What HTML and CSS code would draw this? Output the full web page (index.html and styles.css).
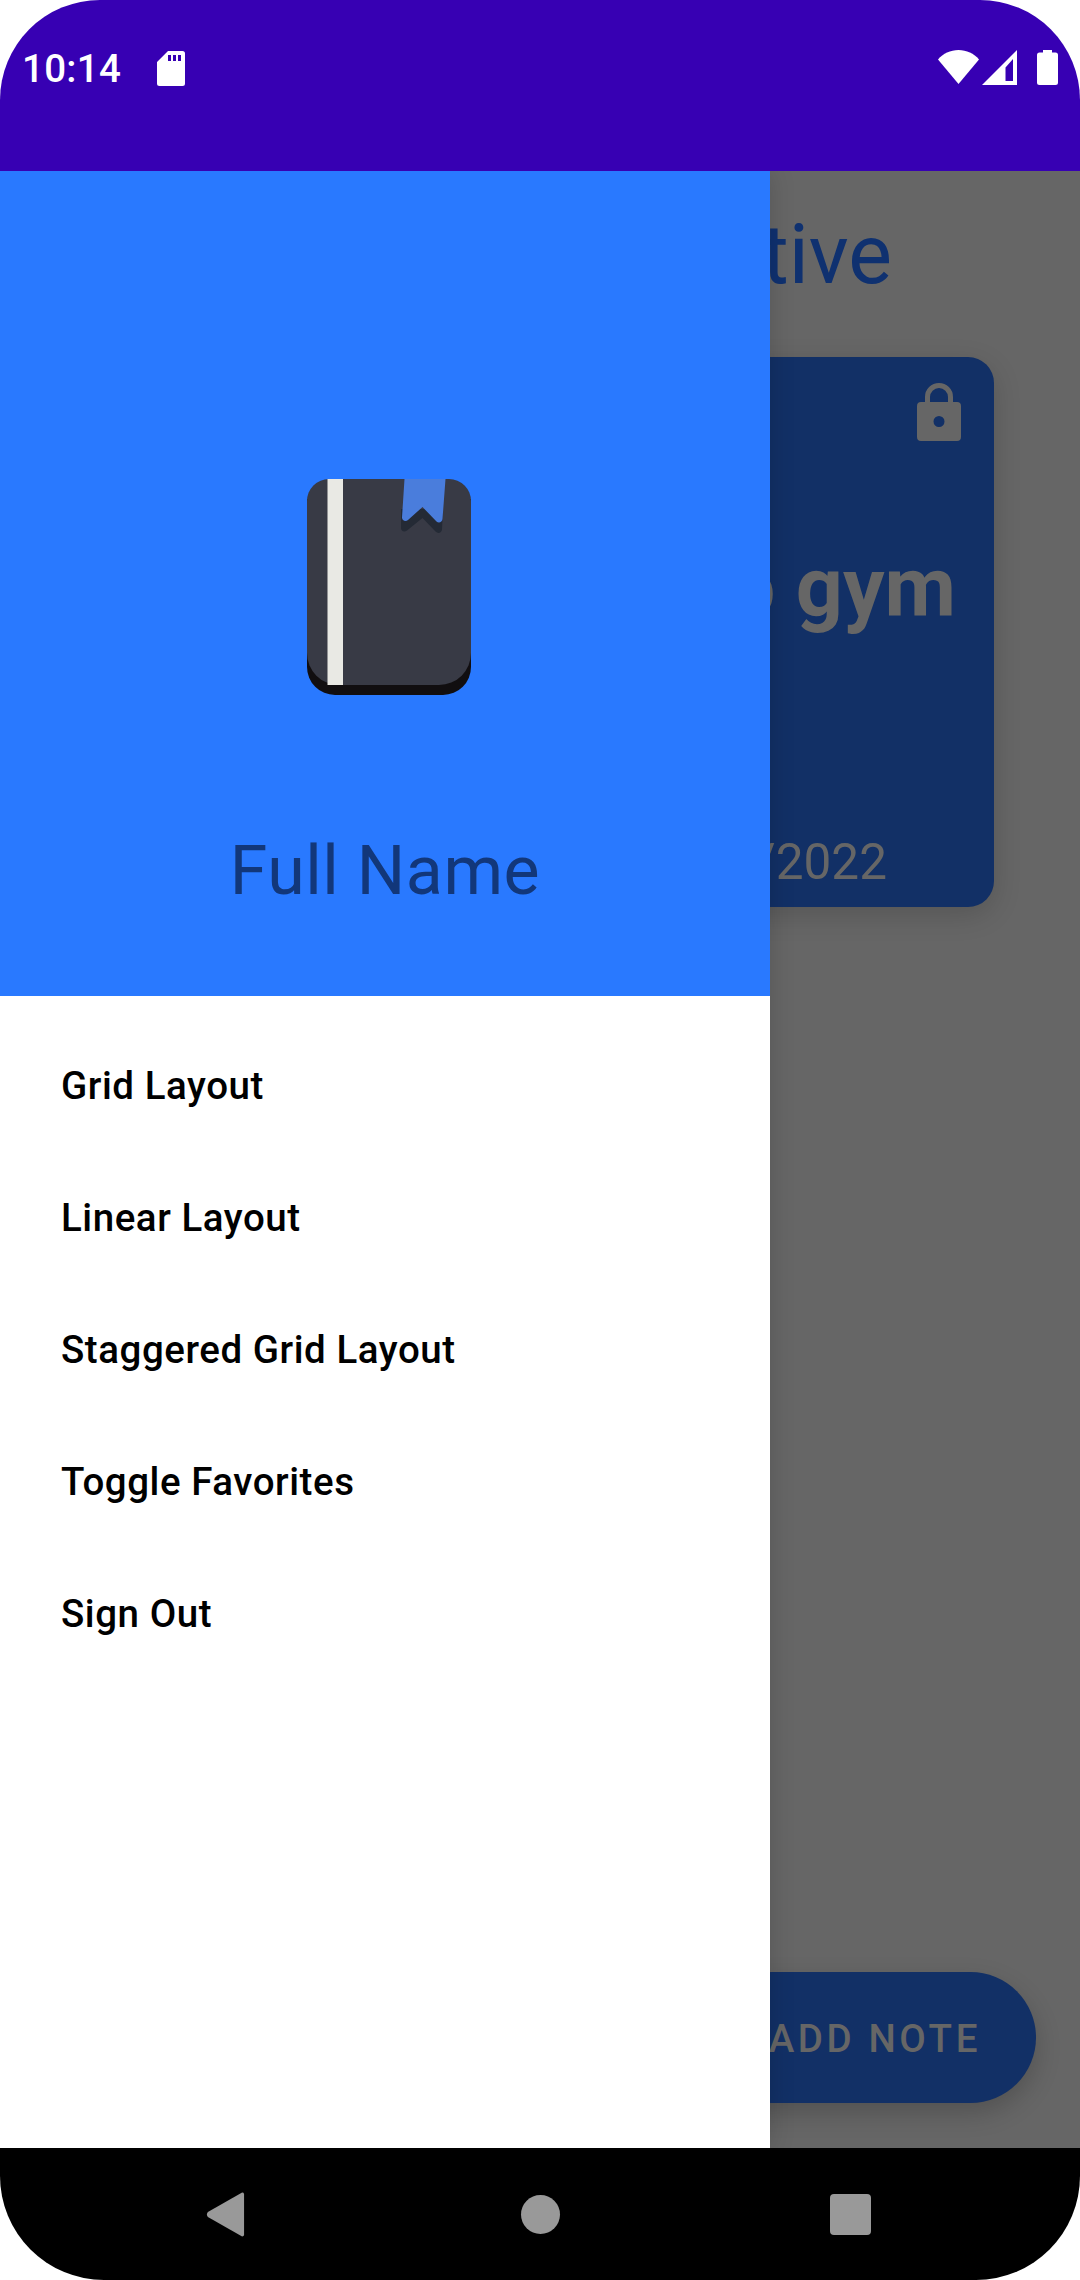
FILE: index.html
```html
<!DOCTYPE html>
<html lang="en">
<head>
<meta charset="utf-8">
<title>Notes</title>
<link rel="stylesheet" href="styles.css">
</head>
<body>
<div class="phone">
  <header class="status">
    <div class="status-left">
      <span class="clock">10:14</span>
      <svg class="sd" viewBox="0 0 28 35"><path fill="#fff" fill-rule="evenodd" d="M11 0h14.500a2.500 2.500 0 0 1 2.500 2.500v30a2.500 2.500 0 0 1-2.500 2.500h-23a2.500 2.500 0 0 1-2.500-2.500v-21.500zM11 4v6h3v-6zM16 4v6h3v-6zM21 4v6h3v-6z"/></svg>
    </div>
    <div class="status-right">
      <svg class="wifi" viewBox="0 0 41 34"><path fill="#fff" d="M0 9.500C5 3.500 12.500 0 20.500 0S36 3.500 41 9.500L20.500 34z"/></svg>
      <svg class="signal" viewBox="0 0 35 35"><path fill="#fff" fill-rule="evenodd" d="M35 0v35H0zM31 9l-7.500 8.500V31H31z"/></svg>
      <svg class="battery" viewBox="0 0 21 35"><path fill="#fff" d="M6 0h9v2.500h3.500A2.500 2.500 0 0 1 21 5v27.500a2.500 2.500 0 0 1-2.500 2.500h-16A2.500 2.500 0 0 1 0 32.500V5a2.500 2.500 0 0 1 2.500-2.500H6z"/></svg>
    </div>
  </header>

  <main class="screen">
    <h1 class="section-title">Active</h1>
    <article class="note">
      <svg class="lock" viewBox="0 0 44 58"><path fill="#666" fill-rule="evenodd" d="M8 19v-5a14 14 0 0 1 28 0v5h4a4 4 0 0 1 4 4v31a4 4 0 0 1-4 4H4a4 4 0 0 1-4-4V23a4 4 0 0 1 4-4zM13 19h18v-5a9 9 0 0 0-18 0zM22 33a5.500 5.500 0 1 0 0 11 5.500 5.500 0 0 0 0-11z"/></svg>
      <h2 class="note-title">Go to gym</h2>
      <p class="note-date">12/12/2022</p>
    </article>
    <button class="fab">ADD NOTE</button>

    <aside class="drawer">
      <div class="drawer-head">
        <svg class="book" viewBox="0 0 164 216">
          <path fill="#110e10" d="M0 20h164v168a28 28 0 0 1-28 28H28a28 28 0 0 1-28-28z"/>
          <path fill="#383a45" d="M22 0h120a22 22 0 0 1 22 22v152a32 32 0 0 1-32 32H32a32 32 0 0 1-32-32V22A22 22 0 0 1 22 0z"/>
          <rect x="20.500" y="0" width="15.500" height="206" fill="#e9e9e4"/>
          <path fill="#242a35" d="M94 30v19c0 3.500 3.500 4.500 6 2.500L115.500 39l13 13.500c2.500 2.500 6 1.500 6.500-2L136 30z"/>
          <path fill="#4a7ddc" d="M97.500 0H138.500L135.500 40c-.3 3.500-4 4.500-6 2.500L115.500 28 101 41c-2.500 2-6 .5-6-2.500z"/>
        </svg>
        <div class="full-name">Full Name</div>
      </div>
      <nav class="menu">
        <a class="menu-item">Grid Layout</a>
        <a class="menu-item">Linear Layout</a>
        <a class="menu-item">Staggered Grid Layout</a>
        <a class="menu-item">Toggle Favorites</a>
        <a class="menu-item">Sign Out</a>
      </nav>
    </aside>
  </main>

  <footer class="navbar">
    <svg class="nav-back" viewBox="0 0 38 46"><path fill="#999" d="M36 0.500a2 2 0 0 1 2 1.500v42a2 2 0 0 1-2 1.500L1 25.500a4 4 0 0 1 0-5z"/></svg>
    <span class="nav-home"></span>
    <span class="nav-recent"></span>
  </footer>
</div>
</body>
</html>
```

FILE: styles.css
```css
* { box-sizing: border-box; }
html, body { margin: 0; padding: 0; background: #fff; }
body { width: 1080px; height: 2280px; overflow: hidden; font-family: Roboto, "Liberation Sans", sans-serif; }

.phone { width: 1080px; height: 2280px; display: flex; flex-direction: column; overflow: hidden; }

.status {
  flex: 0 0 171px; background: #3700b3; border-radius: 100px 100px 0 0;
  display: flex; justify-content: space-between; align-items: flex-start;
  padding: 50px 22px 0 22px;
}
.status-left { display: flex; align-items: center; gap: 36px; }
.clock { color: #fff; font-size: 38.500px; font-weight: 500; line-height: 38px; height: 36px; letter-spacing: 0.300px; }
.sd { width: 28px; height: 35px; display: block; }
.status-right { display: flex; align-items: flex-start; gap: 3px; }
.wifi { width: 41px; height: 34px; display: block; }
.signal { width: 35px; height: 35px; display: block; }
.battery { width: 21px; height: 35px; display: block; margin-left: 17px; }

.screen { flex: 1 1 auto; position: relative; background: #666; overflow: hidden; display: flex; flex-direction: column; align-items: flex-end; }

.section-title { margin: 36px 188px 0 0; font-weight: 400; font-size: 82.500px; line-height: 96px; color: #0f3170; white-space: nowrap; }
.note {
  width: 320px; height: 550px; margin: 54px 86px 0 0; background: #123066; border-radius: 26px;
  box-shadow: 0 8px 28px rgba(0,0,0,.16);
  display: flex; flex-direction: column; align-items: flex-end; padding: 26px 33px 0 0;
  white-space: nowrap;
}
.lock { width: 44px; height: 58px; display: block; }
.note-title { margin: 99px 5px 0 0; font-size: 82.500px; line-height: 96px; font-weight: 700; color: #666; }
.note-date { margin: auto 74px 15px 0; font-size: 49.500px; line-height: 60px; color: #666; font-weight: 400; }
.fab {
  position: absolute; top: 1801px; right: 44px; width: 330px; height: 131px; padding: 2px 55px 0 0;
  border: 0; border-radius: 66px; background: #123066; color: #666; text-align: right;
  font: 500 38.500px Roboto, sans-serif; letter-spacing: 3.600px;
  box-shadow: 0 10px 26px rgba(0,0,0,.2);
}

.drawer {
  position: absolute; left: 0; top: 0; bottom: 0; width: 770px; background: #fff;
  box-shadow: 0 0 24px rgba(0,0,0,.16);
  display: flex; flex-direction: column;
}
.drawer-head { flex: 0 0 825px; background: #2979ff; display: flex; flex-direction: column; align-items: center; padding-top: 308px; }
.book { width: 164px; height: 216px; display: block; margin-left: 8px; }
.full-name { margin-top: 136px; font-size: 68px; line-height: 80px; color: #12377a; letter-spacing: 0.550px; text-align: center; }
.menu { display: flex; flex-direction: column; padding-top: 23px; }
.menu-item { height: 132px; padding-left: 61px; display: flex; align-items: center; font-size: 38.500px; font-weight: 500; color: #000; letter-spacing: 0.550px; }

.navbar {
  flex: 0 0 132px; background: #000; border-radius: 0 0 104px 104px;
  display: flex; align-items: center;
}
.nav-back { width: 39px; height: 45px; display: block; margin-left: 206px; }
.nav-home { width: 39px; height: 39px; border-radius: 50%; background: #999; margin-left: 276px; }
.nav-recent { width: 41px; height: 41px; border-radius: 4px; background: #999; margin-left: 270px; }
```
